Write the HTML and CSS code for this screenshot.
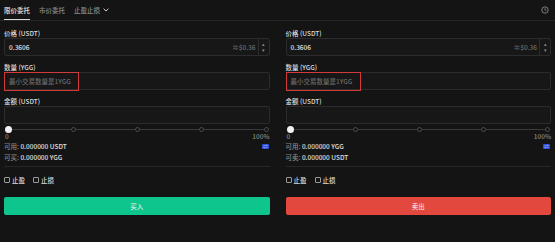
FILE: index.html
```html
<!DOCTYPE html>
<html>
<head>
<meta charset="utf-8">
<link rel="stylesheet" href="styles.css">
</head>
<body>
<div class="page">
  <div class="header">
    <div class="tabs">
      <span class="tab active">限价委托</span>
      <span class="tab">市价委托</span>
      <span class="tab">止盈止损 <svg class="chev" width="6" height="4" viewBox="0 0 6 4"><path d="M0.6 0.7 L3 3 L5.4 0.7" fill="none" stroke="#cfcfcf" stroke-width="1"/></svg></span>
    </div>
    <svg class="hist" width="8" height="8" viewBox="0 0 8 8"><circle cx="4" cy="4" r="3.2" fill="none" stroke="#8a8a8a" stroke-width="0.9"/><path d="M4 2.2 V4.2 H5.4" fill="none" stroke="#8a8a8a" stroke-width="0.8"/></svg>
  </div>
  <div class="cols">
    <div class="col">
      <div class="label">价格 (USDT)</div>
      <div class="input">
        <span class="val">0.3606</span>
        <span class="approx">≈$0.36</span>
        <div class="stepper"><span>▴</span><span>▾</span></div>
      </div>
      <div class="label">数量 (YGG)</div>
      <div class="input qty">
        <span class="ph">最小交易数量是1YGG</span>
        <div class="mark"></div>
      </div>
      <div class="label">金额 (USDT)</div>
      <div class="input"></div>
      <div class="slider">
        <div class="track"></div>
        <span class="dot knob"></span><span class="dot"></span><span class="dot"></span><span class="dot"></span><span class="dot"></span>
      </div>
      <div class="scale"><span>0</span><span>100%</span></div>
      <div class="info">
        <div class="line"><span><span class="muted">可用:</span> 0.000000 USDT</span>
          <svg class="swap" width="7" height="5" viewBox="0 0 7 5"><rect width="7" height="5" rx="0.8" fill="#2d4fd6"/><path d="M1.3 1.6 H5.6 M4.4 0.8 L5.6 1.6 M5.7 3.4 H1.4 M2.6 4.2 L1.4 3.4" stroke="#9fb2ff" stroke-width="0.6" fill="none"/></svg>
        </div>
        <div class="line"><span><span class="muted">可买:</span> 0.000000 YGG</span></div>
      </div>
      <div class="divider"></div>
      <div class="checks">
        <label class="check"><span class="box"></span>止盈</label>
        <label class="check"><span class="box"></span>止损</label>
      </div>
      <button class="btn buy">买入</button>
    </div>
    <div class="col">
      <div class="label">价格 (USDT)</div>
      <div class="input">
        <span class="val">0.3606</span>
        <span class="approx">≈$0.36</span>
        <div class="stepper"><span>▴</span><span>▾</span></div>
      </div>
      <div class="label">数量 (YGG)</div>
      <div class="input qty">
        <span class="ph">最小交易数量是1YGG</span>
        <div class="mark"></div>
      </div>
      <div class="label">金额 (USDT)</div>
      <div class="input"></div>
      <div class="slider">
        <div class="track"></div>
        <span class="dot knob"></span><span class="dot"></span><span class="dot"></span><span class="dot"></span><span class="dot"></span>
      </div>
      <div class="scale"><span>0</span><span>100%</span></div>
      <div class="info">
        <div class="line"><span><span class="muted">可用:</span> 0.000000 YGG</span>
          <svg class="swap" width="7" height="5" viewBox="0 0 7 5"><rect width="7" height="5" rx="0.8" fill="#2d4fd6"/><path d="M1.3 1.6 H5.6 M4.4 0.8 L5.6 1.6 M5.7 3.4 H1.4 M2.6 4.2 L1.4 3.4" stroke="#9fb2ff" stroke-width="0.6" fill="none"/></svg>
        </div>
        <div class="line"><span><span class="muted">可卖:</span> 0.000000 USDT</span></div>
      </div>
      <div class="divider"></div>
      <div class="checks">
        <label class="check"><span class="box"></span>止盈</label>
        <label class="check"><span class="box"></span>止损</label>
      </div>
      <button class="btn sell">卖出</button>
    </div>
  </div>
</div>
</body>
</html>
```
FILE: styles.css
```css
* { box-sizing: border-box; }
html, body { margin: 0; padding: 0; background: #141414; }
body {
  width: 555px; height: 242px; overflow: hidden;
  font-family: "Noto Sans CJK SC", "Noto Sans", sans-serif;
  font-size: 6.5px; color: #dcdcdc; font-weight: 500;
}
.page { width: 555px; }
.header {
  height: 21px; border-bottom: 1px solid #262626;
  display: flex; align-items: center; justify-content: space-between;
  padding: 0 6px 0 4px;
}
.tabs { display: flex; gap: 9px; height: 20px; align-items: stretch; }
.tab { color: #8c8c8c; display: flex; align-items: center; gap: 3px; line-height: 1; border-bottom: 1.5px solid transparent; padding-top: 1px; font-size: 6.5px; }
.tab.active { color: #e8e8e8; border-bottom-color: #d8d8d8; }
.chev { display: block; }
.hist { display: block; }
.cols { display: flex; gap: 16px; padding: 7px 4px 0 4px; }
.col { flex: 1; display: flex; flex-direction: column; }
.label { height: 10px; line-height: 10px; color: #dedede; }
.input {
  position: relative; height: 18px; border: 1px solid #2c2c2c; border-radius: 2px;
  background: #171717; display: flex; align-items: center; padding-left: 4px;
  margin-bottom: 6px;
}
.val { color: #e6e6e6; flex: 1; }
.approx { color: #6e6e6e; margin-right: 2px; }
.stepper {
  width: 11px; height: 16px; border-left: 1px solid #2c2c2c;
  display: flex; flex-direction: column; align-items: center; justify-content: center;
  color: #8a8a8a; font-size: 5px; line-height: 6px;
}
.ph { color: #6a6a6a; }
.mark {
  position: absolute; left: -1px; top: -1px; width: 75px; height: 19px;
  border: 1.2px solid #d23a3a;
}
.slider { position: relative; height: 6px; margin-top: -4px; display: flex; justify-content: space-between; align-items: center; padding: 0 1px; }
.track { position: absolute; left: 3px; right: 3px; top: 2.5px; height: 1px; background: #3a3a3a; }
.dot { position: relative; width: 5px; height: 5px; border-radius: 50%; border: 1px solid #4a4a4a; background: #141414; }
.dot.knob { width: 7px; height: 7px; border: none; background: #f2f2f2; }
.scale { display: flex; justify-content: space-between; color: #8a8a8a; height: 9px; line-height: 9px; font-size: 6.5px; padding-left: 1px; }
.line { display: flex; justify-content: space-between; align-items: center; height: 11px; line-height: 11px; color: #e0e0e0; }
.muted { color: #8a8a8a; }
.swap { display: block; margin-right: 1px; }
.divider { height: 1px; background: #262626; margin-top: 3px; }
.checks { display: flex; gap: 8px; height: 24px; align-items: center; margin-top: 1px; }
.check { display: flex; align-items: center; gap: 2px; color: #dcdcdc; }
.box { width: 6px; height: 6px; border: 1px solid #9a9a9a; border-radius: 1px; }
.btn {
  margin-top: 5px; height: 18px; border: none; border-radius: 2px;
  font-family: inherit; font-size: 6.5px; color: #f4f4f4; width: 100%;
}
.buy { background: #0fc58e; }
.sell { background: #e2483d; }
```
